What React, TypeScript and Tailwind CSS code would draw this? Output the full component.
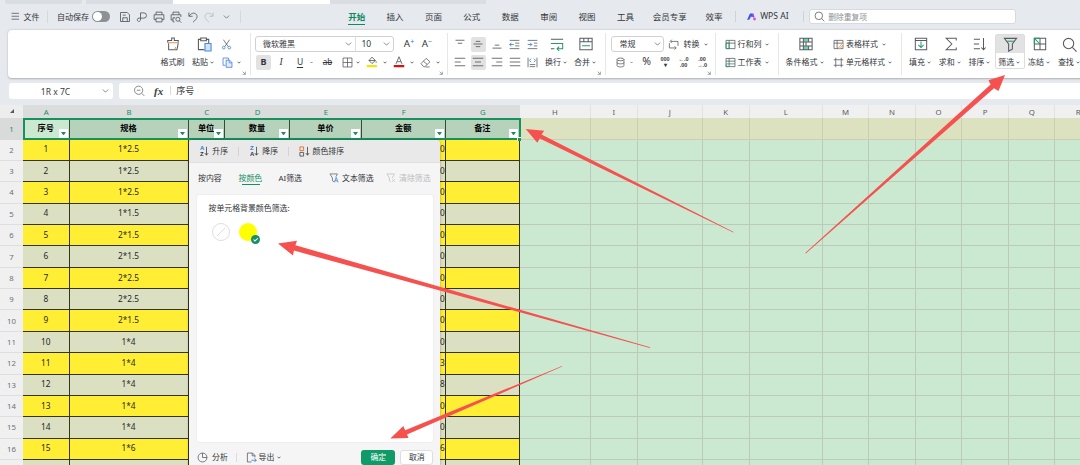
import type { ReactNode } from "react"

const RED = "#f5514f"

function Icon({ size = "size-[12px]", children, color = "text-[#575b60]" }: { size?: string; children: ReactNode; color?: string }) {
  return (
    <svg viewBox="0 0 16 16" className={`${size} ${color} shrink-0`} fill="none" stroke="currentColor" strokeWidth="1.15">
      {children}
    </svg>
  )
}

function Caret({ className = "w-[8px]" }: { className?: string }) {
  return (
    <span className={`${className} flex shrink-0 justify-center`}>
      <svg viewBox="0 0 6 4" className="h-[3px] w-[4px]" fill="none" stroke="#55595e" strokeWidth="1.3">
        <path d="M.8 .8 3 3 5.2 .8" />
      </svg>
    </span>
  )
}

function Chevron({ className = "" }: { className?: string }) {
  return (
    <svg viewBox="0 0 8 5" className={`h-[4px] w-[7px] shrink-0 ${className}`} fill="none" stroke="#6b6f74" strokeWidth="1">
      <path d="M.7 .7 4 4 7.3 .7" />
    </svg>
  )
}

function Slot({ w, on, children }: { w: string; on?: boolean; children?: ReactNode }) {
  return (
    <span className={`${w} flex h-[18px] shrink-0 items-center justify-center`}>
      {on ? <span className="flex size-[15px] items-center justify-center rounded-[2px] bg-[#e2e2e3]">{children}</span> : children}
    </span>
  )
}

function Group({ w, launcher, children }: { w: string; launcher?: boolean; children: ReactNode }) {
  return (
    <div className={`${w} relative flex shrink-0 py-[5.5px]`}>
      {children}
      <span className="absolute top-[3px] right-0 h-[42px] w-px bg-[#e6e7e8]" />
      {launcher && (
        <svg viewBox="0 0 6 6" className="absolute right-[5px] bottom-[3px] size-[4px]" fill="none" stroke="#77797c">
          <path d="M1 1l4 4M5 1v4H1" />
        </svg>
      )}
    </div>
  )
}

function BigButton({ w, icon, label, caret = true }: { w: string; icon: ReactNode; label: string; caret?: boolean }) {
  return (
    <div className={`${w} shrink-0`}>
      <Slot w="w-full">{icon}</Slot>
      <Slot w="w-full">
        {label}
        {caret && <Caret />}
      </Slot>
    </div>
  )
}

// horizontal strokes, each given as [y, x1, x2]
function Lines({ rows }: { rows: number[][] }) {
  return (
    <Icon>
      {rows.map(([y, a, b]) => (
        <path key={y} d={`M${a} ${y}H${b}`} />
      ))}
    </Icon>
  )
}

function TableIcon({ accent }: { accent?: ReactNode }) {
  return (
    <Icon size="size-[11px]">
      <path d="M1.5 2h13v12h-13zM1.5 6h13M6 2v12" />
      {accent}
    </Icon>
  )
}

// two stacked lines of tiny glyphs for the number format buttons
function Digits({ top, bottom }: { top: string; bottom: string }) {
  return (
    <span className="flex flex-col items-center font-['Liberation_Sans'] text-[5.500px] leading-[6px] font-bold">
      <span>{top}</span>
      <span>{bottom}</span>
    </span>
  )
}

const menu = ["开始", "插入", "页面", "公式", "数据", "审阅", "视图", "工具"]

function MenuBar() {
  return (
    <div className="flex h-[25.5px] items-center text-[8px] text-[#33363a]">
      <div className="flex w-[47px] items-center gap-[4px] pl-[11px]">
        <Icon size="size-[8.5px]">
          <path d="M1 2.5h14M1 8h14M1 13.5h14" strokeWidth="1.5" />
        </Icon>
        文件
      </div>
      <span className="h-[12px] w-px bg-[#d5d9de]" />
      <span className="ml-[9px] w-[34px] whitespace-nowrap">自动保存</span>
      <span className="ml-px flex h-[11px] w-[18px] items-center rounded-full bg-[#8d9095] p-px">
        <span className="size-[9px] rounded-full bg-white" />
      </span>
      <div className="ml-[7px] flex w-[125px] items-center">
        <Slot w="w-[16.8px]">
          <Icon>
            <path d="M2 2h9l3 3v9H2zM5 14V9h6v5M5 5.5h4" />
          </Icon>
        </Slot>
        <Slot w="w-[16.8px]">
          <Icon>
            <path d="M6 12V2.500h4.500a3.500 3.500 0 0 1 0 7H4a2.200 2.200 0 1 0 2 3" />
          </Icon>
        </Slot>
        <Slot w="w-[16.8px]">
          <Icon>
            <path d="M4 5V1.500h8V5M4 11.500H1.500V5h13v6.500H12M4 9.500h8v5H4z" />
          </Icon>
        </Slot>
        <Slot w="w-[16.8px]">
          <Icon>
            <path d="M4 5V1.500h8V5M4 12H1.500V5h13v3M6 14.500H4V9h3" />
            <circle cx="10.500" cy="11" r="2.700" />
            <path d="m12.500 13 2.500 2.500" />
          </Icon>
        </Slot>
        <Slot w="w-[16.8px]">
          <Icon>
            <path d="M2.500 2v5h5M2.800 6.800C5 3 9 1.800 11.800 4c3 2.500 2 6-3.800 11" />
          </Icon>
        </Slot>
        <Slot w="w-[16.8px]">
          <Icon color="text-[#b9bdc2]">
            <path d="M13.500 2v5h-5M13.200 6.800C11 3 7 1.800 4.200 4c-3 2.500-2 6 3.800 11" />
          </Icon>
        </Slot>
        <Slot w="w-[17px]">
          <Chevron />
        </Slot>
        <span className="ml-[5px] h-[12px] w-px bg-[#d5d9de]" />
      </div>
      <div className="ml-[95.500px] flex pt-[2px] text-[8.500px]">
        {menu.map((m, i) => (
          <span key={m} className="flex w-[38.4px] flex-col items-center">
            <span className={i === 0 ? "border-b border-[#0f8a5f] leading-[14px] font-bold text-[#0f8a5f]" : "leading-[14px]"}>{m}</span>
          </span>
        ))}
        <span className="w-[50.5px] text-center leading-[14px]">会员专享</span>
        <span className="w-[38px] text-center leading-[14px]">效率</span>
      </div>
      <span className="ml-[2px] h-[11px] w-px bg-[#cfd3d8]" />
      <svg viewBox="0 0 18 16" className="ml-[11px] h-[8px] w-[9px]">
        <path d="M6 1h4l3 6-3 1-2-1-3 6-5 1z" fill="#4353f2" />
        <path d="M9 1l4 0 2 7-3 1z" fill="#8a4df0" />
        <circle cx="15" cy="12" r="2.800" fill="#d650dd" />
      </svg>
      <span className="ml-[4px] w-[43px] text-[8.600px] whitespace-nowrap">WPS AI</span>
      <span className="h-[11px] w-px bg-[#cfd3d8]" />
      <div className="ml-[5px] flex h-[15px] w-[207px] items-center gap-[3px] rounded-[3px] border border-[#d6d9dd] bg-white px-[4px] text-[7.800px] text-[#8c8f93]">
        <Icon size="size-[11px]">
          <circle cx="7" cy="7" r="5.500" />
          <path d="m11 11 4 4" />
        </Icon>
        删除重复项
      </div>
    </div>
  )
}

function Ribbon() {
  return (
    <div className="ml-[8px] flex h-[48.5px] w-[1080px] rounded-l-[4px] bg-white text-[8px] whitespace-nowrap text-[#33363a] shadow-[0_0.5px_2px_rgba(0,0,0,0.25)]">
      <Group w="w-[242.5px] pl-[148.500px]" launcher>
        <BigButton
          w="w-[32px]"
          label="格式刷"
          caret={false}
          icon={
            <Icon size="size-[14px]">
              <path d="M2 6.500V4h4.500V1.200h3V4H14v2.500M3 7v7.500h9.500L14 7" />
              <path d="M2 6.500h12M10 14.500l1-3" stroke="#df9358" />
            </Icon>
          }
        />
        <BigButton
          w="w-[31px]"
          label="粘贴"
          icon={
            <Icon size="size-[15px]">
              <path d="M8 13.500H1.500v-11H4M10 2.500h2.500V7M4 1h6v3H4z" />
              <path d="M8.500 7H15v8H8.500z" fill="#cfe2fb" stroke="#4a8be0" />
            </Icon>
          }
        />
        <div className="w-[27px]">
          <Slot w="w-[14px]">
            <Icon size="size-[11px]">
              <path d="m3.500 1 7 10M12.500 1l-7 10" />
              <circle cx="4" cy="12.500" r="2" stroke="#3f7fd8" />
              <circle cx="12" cy="12.500" r="2" stroke="#3f7fd8" />
            </Icon>
          </Slot>
          <div className="flex">
            <Slot w="w-[16px]">
              <Icon size="size-[11px]" color="text-[#3f7fd8]">
                <path d="M5 12H1.500V1.500h8V4" />
                <path d="M6 4.500h5l3.500 3.500v7H6zM10.500 4.500V8.500h4" fill="#e3eefc" />
              </Icon>
            </Slot>
            <Caret className="w-[7px] items-center" />
          </div>
        </div>
      </Group>

      <Group w="w-[197px]" launcher>
        <div className="flex flex-col">
          <div className="flex h-[18px] items-center pl-[4.500px]">
            <div className="flex h-[16px] w-[139px] items-center rounded-[3px] border border-[#cfd1d4]">
              <div className="flex h-full w-[99.5px] items-center justify-between border-r border-[#dcdee0] pr-[3px] pl-[7px]">
                微软雅黑
                <Chevron />
              </div>
              <div className="flex flex-1 items-center justify-between pr-[3px] pl-[6px] text-[8.500px]">
                10
                <Chevron />
              </div>
            </div>
            <span className="ml-[6px] flex w-[18px] items-start justify-center text-[9.800px] leading-[12px]">
              A<span className="text-[7px] leading-[7px] text-[#2f76dd]">+</span>
            </span>
            <span className="flex w-[18px] items-start justify-center text-[9.800px] leading-[12px]">
              A<span className="text-[7px] leading-[7px] text-[#2f76dd]">−</span>
            </span>
          </div>
          <div className="flex pl-[4.500px]">
            <Slot w="w-[17px]" on>
              <b className="text-[9px]">B</b>
            </Slot>
            <Slot w="w-[18px]">
              <span className="font-['Liberation_Serif'] text-[9.500px] italic">I</span>
            </Slot>
            <Slot w="w-[20px]">
              <span className="text-[8.500px] underline underline-offset-2">U</span>
            </Slot>
            <Caret className="w-[3px] items-center" />
            <Slot w="w-[29px]">
              <span className="line-through">ab</span>
            </Slot>
            <Slot w="w-[11px]">
              <Icon size="size-[11px]">
                <path d="M1.500 1.500h13v13h-13zM8 1.500v13M1.500 8h13" />
              </Icon>
            </Slot>
            <Caret className="w-[9px] items-center" />
            <Slot w="w-[20px]">
              <Icon size="size-[12px]">
                <path d="M4 6 8 1.500 12.500 6 8 10zM4 6h8.500M13.500 7v2" />
                <path d="M1 12h13.500v3H1z" fill="#f3e50c" stroke="none" />
              </Icon>
            </Slot>
            <Caret className="w-[5px] items-center" />
            <Slot w="w-[23px]">
              <Icon size="size-[12px]">
                <path d="M4 10.500 8 1l4 9.500M5.500 7.500h5" />
                <path d="M1 12h14v3H1z" fill="#dc1010" stroke="none" />
              </Icon>
            </Slot>
            <Caret className="w-[4px] items-center" />
            <Slot w="w-[22px]">
              <Icon size="size-[11px]">
                <path d="M1.500 9.500 9 2l5.500 5-7.500 7H5zM5 6l5.500 5M8 14.500h6" />
              </Icon>
            </Slot>
            <Caret className="w-[4px] items-center" />
          </div>
        </div>
      </Group>

      <Group w="w-[158px] pl-[3.500px]" launcher>
        <div>
          <div className="flex">
            <Slot w="w-[18px]"><Lines rows={[[3, 2, 14], [7, 5, 11]]} /></Slot>
            <Slot w="w-[18.5px]" on><Lines rows={[[4.500, 5, 11], [8, 2, 14], [11.500, 5, 11]]} /></Slot>
            <Slot w="w-[18px]"><Lines rows={[[9.500, 5, 11], [13.500, 2, 14]]} /></Slot>
            <Slot w="w-[18px]">
              <Icon size="size-[11px]">
                <path d="M1 2h14M9 6h6M9 10h6M1 14h14" />
                <path d="M7 8H1M3.500 5.500 1 8l2.500 2.500" stroke="#2f76dd" />
              </Icon>
            </Slot>
            <Slot w="w-[18.500px]">
              <Icon size="size-[11px]">
                <path d="M1 2h14M10 6h5M10 10h5M1 14h14" />
                <path d="M1 8h6M4.500 5.500 7 8l-2.500 2.500" stroke="#2f76dd" />
              </Icon>
            </Slot>
          </div>
          <div className="flex">
            <Slot w="w-[18px]"><Lines rows={[[3, 1, 15], [8, 1, 9], [13, 1, 15]]} /></Slot>
            <Slot w="w-[18.5px]" on><Lines rows={[[3, 1, 15], [8, 4, 12], [13, 1, 15]]} /></Slot>
            <Slot w="w-[18px]"><Lines rows={[[3, 1, 15], [8, 7, 15], [13, 1, 15]]} /></Slot>
            <Slot w="w-[18px]"><Lines rows={[[3, 1, 15], [8, 1, 15], [13, 1, 15]]} /></Slot>
            <Slot w="w-[18.500px]">
              <Icon size="size-[11px]">
                <path d="M1.500 1v14M14.500 1v14M4 11h8M4 14h8" />
                <path d="M6 2.500 3.500 5 6 7.500M10 2.500 12.500 5 10 7.500" stroke="#2f76dd" />
              </Icon>
            </Slot>
          </div>
        </div>
        <BigButton
          w="w-[30px]"
          label="换行"
          icon={
            <Icon size="size-[14px]">
              <path d="M1 2.500h14M1 13.500h4" />
              <path d="M1 7.500h13.500v6H8M10.500 11 8 13.500l2.500 2.500" stroke="#219a6c" />
            </Icon>
          }
        />
        <BigButton
          w="w-[28px]"
          label="合并"
          icon={
            <Icon size="size-[14px]">
              <path d="M1 1.500h14v13H1zM1 5.500h14M5.500 1.500v4M10.500 1.500v4" />
              <path d="M3.500 10h9" stroke="#219a6c" />
            </Icon>
          }
        />
      </Group>

      <Group w="w-[110px] pl-[5px]" launcher>
        <div>
          <div className="flex items-center">
            <div className="flex h-[16px] w-[53px] items-center justify-between rounded-[3px] border border-[#cfd1d4] pr-[2px] pl-[8px]">
              常规
              <Chevron />
            </div>
            <Slot w="w-[20px]">
              <Icon size="size-[11px]">
                <path d="M4 3.500h10.500V10M2 6v7h9.500M5.500 1 3 3.500 5.500 6M9.500 10.500 12 13l-2.500 2.500" />
              </Icon>
            </Slot>
            转换
            <Caret className="w-[12px]" />
          </div>
          <div className="flex">
            <Slot w="w-[19px]">
              <Icon size="size-[11px]">
                <ellipse cx="8" cy="3.500" rx="5" ry="2" />
                <path d="M3 3.500v9c0 2.600 10 2.600 10 0v-9M3 8c0 2.600 10 2.600 10 0" />
              </Icon>
            </Slot>
            <Caret className="w-[3px] items-center" />
            <Slot w="w-[28px]"><span className="text-[10.500px]">%</span></Slot>
            <Slot w="w-[9px]"><Digits top="000" bottom="▾" /></Slot>
            <Slot w="w-[28px]"><Digits top="←.0" bottom=".00" /></Slot>
            <Slot w="w-[9px]"><Digits top=".00" bottom="→.0" /></Slot>
          </div>
        </div>
      </Group>

      <Group w="w-[63px] pl-[8.500px]">
        <div>
          <div className="flex items-center">
            <Slot w="w-[13.500px]"><TableIcon accent={<path d="M1.500 6h4.500v8H1.500z" stroke="#219a6c" />} /></Slot>
            行和列
            <Caret className="w-[10px]" />
          </div>
          <div className="flex items-center">
            <Slot w="w-[13.500px]"><TableIcon accent={<path d="M1.500 11v3H5M1.500 10h13" stroke="#219a6c" />} /></Slot>
            工作表
            <Caret className="w-[10px]" />
          </div>
        </div>
      </Group>

      <Group w="w-[123px] pl-[6px]">
        <BigButton
          w="w-[42px]"
          label="条件格式"
          icon={
            <Icon size="size-[14px]">
              <path d="M5 1.500h6v4H5zM8 10.500h3v4H5v-4z" fill="#6ed3a4" stroke="none" />
              <path d="M1 1.500h14v13H1zM1 5.800h14M1 10.200h14M5 1.500v13M11 1.500v4.300M11 10.200v4.300M8 5.800v4.400" />
            </Icon>
          }
        />
        <div className="ml-[4.500px]">
          <div className="flex items-center">
            <Slot w="w-[15px]">
              <TableIcon accent={<path d="m8 13 5.500-6.500 1.500 1.500-5 6z" fill="#fff" stroke="#e09a4c" />} />
            </Slot>
            表格样式
            <Caret className="w-[11px]" />
          </div>
          <div className="flex items-center">
            <Slot w="w-[15px]">
              <Icon size="size-[11px]">
                <path d="M4 1v14M12 1v14M1 4h14M1 12h14" />
              </Icon>
            </Slot>
            <span className="text-[7.800px]">单元格样式</span>
            <Caret className="w-[11px]" />
          </div>
        </div>
      </Group>

      <div className="flex py-[5.500px] pl-[4.500px]">
        <BigButton
          w="w-[29.800px]"
          label="填充"
          icon={
            <Icon size="size-[14px]">
              <path d="M1.500 1.500h13v13h-13zM1.500 4h13" />
              <path d="M8 5v7M5 9l3 3 3-3" stroke="#219a6c" />
            </Icon>
          }
        />
        <BigButton w="w-[29.800px]" label="求和" icon={<Icon size="size-[14px]"><path d="M14 4V1.500H2.500L9 8l-6.500 6.500H14V12" /></Icon>} />
        <BigButton w="w-[29.800px]" label="排序" icon={<Icon size="size-[14px]"><path d="M1 2.500h7M1 8h6M1 13.500h7M12 1v13.500M9.500 12l2.500 2.500 2.500-2.500" /></Icon>} />
        <BigButton
          w="-mt-px h-[35px] w-[29.800px] rounded-[2px] border border-[#dddddf] bg-linear-to-b from-[#e2e2e3] from-55% to-white to-55%"
          label="筛选"
          icon={
            <Icon size="size-[15px]">
              <path d="M1.500 1.500h13L10 7.500V13l-4 2V7.500z" />
              <path d="M4.500 4.500h7" stroke="#219a6c" />
            </Icon>
          }
        />
        <BigButton
          w="w-[29.800px]"
          label="冻结"
          icon={
            <Icon size="size-[14px]">
              <path d="M1.500 1.500h13v13h-13zM8 1.500v13M1.500 8h13" />
              <path d="M1.500 8V1.500H8M1.500 1.500 8 8" stroke="#219a6c" />
            </Icon>
          }
        />
        <BigButton w="w-[29.800px]" label="查找" icon={<Icon size="size-[15px]"><circle cx="7" cy="7" r="5.500" /><path d="m11 11 4.500 4.500" /></Icon>} />
      </div>
    </div>
  )
}

function FormulaBar() {
  return (
    <div className="mt-[4.500px] flex h-[16.500px] gap-[6px] pl-[9px] text-[8.500px] text-[#3a3d41]">
      <div className="flex w-[104px] items-center rounded-[3px] bg-white pr-[4px]">
        <span className="flex-1 pt-px text-center">1R x 7C</span>
        <Chevron />
      </div>
      <div className="flex flex-1 items-center rounded-l-[3px] bg-white">
        <Icon size="ml-[14px] size-[12px]" color="text-[#77797d]">
          <circle cx="7.500" cy="7" r="5.500" />
          <path d="M5 7h5M11.500 11l3.500 3.500" />
        </Icon>
        <span className="ml-[9px] font-['Liberation_Serif'] text-[11px] font-bold italic">fx</span>
        <span className="ml-[7px] h-[9px] w-px bg-[#d8dadc]" />
        <span className="ml-[5px] text-[9px]">序号</span>
      </div>
    </div>
  )
}

const columns = [
  { id: "A", w: "w-[46.500px]", title: "序号" },
  { id: "B", w: "w-[119px]", title: "规格" },
  { id: "C", w: "w-[36.200px]", title: "单位" },
  { id: "D", w: "w-[65.700px]", title: "数量" },
  { id: "E", w: "w-[71.300px]", title: "单价" },
  { id: "F", w: "w-[84.100px]", title: "金额" },
  { id: "G", w: "w-[74.200px]", title: "备注" },
  { id: "H", w: "w-[71px]" },
  { id: "I", w: "w-[46.800px]" },
  { id: "J", w: "w-[65px]" },
  { id: "K", w: "w-[47px]" },
  { id: "L", w: "w-[73px]" },
  { id: "M", w: "w-[46.500px]" },
  { id: "N", w: "w-[46.600px]" },
  { id: "O", w: "w-[46.600px]" },
  { id: "P", w: "w-[46.500px]" },
  { id: "Q", w: "w-[46.500px]" },
  { id: "R", w: "w-[46.500px]" },
]

// spec and the last digit of the amount
const rows = [
  ["1*2.5", "0"],
  ["1*2.5", "0"],
  ["1*2.5", "0"],
  ["1*1.5", "0"],
  ["2*1.5", "0"],
  ["2*1.5", "0"],
  ["2*2.5", "0"],
  ["2*2.5", "0"],
  ["2*1.5", "0"],
  ["1*4", "0"],
  ["1*4", "3"],
  ["1*4", "8"],
  ["1*4", "0"],
  ["1*4", "0"],
  ["1*6", "6"],
  [],
]

function Sheet() {
  return (
    <div className="mt-[5.500px] w-[1110px]">
      <div className="flex h-[13.500px] text-[7.800px]">
        <div className="flex w-[23px] items-center justify-center bg-[#ededee]">
          <svg viewBox="0 0 4 4" className="size-[4px]"><path d="M4 0v4H0z" fill="#55585c" /></svg>
        </div>
        {columns.map((c) => (
          <div
            key={c.id}
            className={`${c.w} flex shrink-0 items-center justify-center pt-px ${c.title ? "bg-[#dbdcdc] text-[#178f63]" : "border-r border-[#e2e2e2] bg-[#f0f0f0] text-[#5b5d60]"}`}
          >
            {c.id}
          </div>
        ))}
      </div>
      <div className="relative flex h-[21.600px] font-bold">
        <div className="flex w-[23px] items-center justify-center bg-[#d9dada] text-[7.800px] font-normal text-[#178f63]">1</div>
        {columns.map((c, i) =>
          c.title ? (
            <div
              key={c.id}
              className={`${c.w} relative flex shrink-0 items-center justify-center border-r border-[#37483d] text-[8.200px] text-black ${i === 0 ? "bg-[#cbe9d0]" : "bg-[#b6d2bb]"}`}
            >
              {c.title}
              <span className="absolute right-px bottom-[1.500px] flex size-[9px] items-center justify-center bg-white">
                <svg viewBox="0 0 6 4" className="h-[3.500px] w-[5px]"><path d="M0 0h6L3 4z" fill="#178f63" /></svg>
              </span>
            </div>
          ) : (
            <div key={c.id} className={`${c.w} shrink-0 border-r border-b border-[#ccceb2] bg-[#dce1bf]`} />
          ),
        )}
        <div className="absolute -top-[0.500px] left-[22.500px] h-[22.500px] w-[498px] border-2 border-[#17925f]">
          <span className="absolute -right-[2.500px] -bottom-[2.500px] size-[4px] border-t border-l border-white bg-[#17925f]" />
        </div>
      </div>
      {rows.map(([spec, last], r) => (
        <div key={r} className="flex h-[21.360px] text-[8.300px] text-[#26272a]">
          <div className="flex w-[23px] items-center justify-center border-b border-[#dedede] bg-[#f0f0f0] text-[7.800px] text-[#6f7174]">{spec && r + 2}</div>
          {columns.map((c, i) =>
            c.title ? (
              <div
                key={c.id}
                className={`${c.w} flex shrink-0 items-center justify-center border-r border-b border-[#35341d] ${r % 2 === 0 ? "bg-[#ffee33]" : "bg-[#dbe0c3]"}`}
              >
                {i === 0 && spec && r + 1}
                {i === 1 && spec}
                {i === 5 && <span className="w-full text-right">{last}</span>}
              </div>
            ) : (
              <div key={c.id} className={`${c.w} shrink-0 border-r border-b border-[#bccabb] bg-[#cbe9d0]`} />
            ),
          )}
        </div>
      ))}
    </div>
  )
}

function SortIcon({ top, bottom, boxes }: { top?: string; bottom?: string; boxes?: boolean }) {
  return (
    <span className="flex items-center">
      {boxes ? (
        <svg viewBox="0 0 6 12" className="h-[11px] w-[5.500px]" fill="none">
          <path d="M1 1h4v4H1z" stroke="#e5702f" />
          <path d="M1 7h4v4H1z" stroke="#55585c" />
        </svg>
      ) : (
        <span className="flex flex-col font-['Liberation_Sans'] text-[6px] leading-[6px] font-bold">
          <span className="text-[#2f76dd]">{top}</span>
          <span>{bottom}</span>
        </span>
      )}
      <svg viewBox="0 0 6 12" className="h-[10px] w-[5px]" fill="none" stroke="#44474b">
        <path d="M3 1v10M1 8.500 3 11l2-2.500" />
      </svg>
    </span>
  )
}

function FilterPanel() {
  return (
    <div className="absolute top-[140px] left-[189px] flex h-[340px] w-[251px] flex-col rounded-t-[4px] bg-[#f5f5f5] text-[7.900px] whitespace-nowrap text-[#303236] shadow-[0_0_3px_rgba(0,0,0,0.3)]">
      <div className="flex h-[23px] items-center rounded-t-[4px] border-b border-[#e0e0e0] bg-[#e9e9e9] pl-[11px]">
        <div className="flex w-[38px] items-center gap-[3px]"><SortIcon top="A" bottom="Z" />升序</div>
        <span className="h-[9px] w-px bg-[#d3d3d3]" />
        <div className="ml-[11px] flex w-[38px] items-center gap-[3px]"><SortIcon top="Z" bottom="A" />降序</div>
        <span className="h-[9px] w-px bg-[#d3d3d3]" />
        <div className="ml-[10px] flex items-center gap-[3px]"><SortIcon boxes />颜色排序</div>
      </div>
      <div className="flex h-[30.500px] items-center pl-[9px]">
        <span className="w-[40.500px]">按内容</span>
        <span className="relative w-[40px] text-[#178f63]">
          按颜色
          <span className="absolute -bottom-[2px] left-[3px] h-px w-[18px] bg-[#178f63]" />
        </span>
        <span className="w-[50.500px]">AI筛选</span>
        <div className="flex w-[57px] items-center gap-[3px]">
          <Icon size="size-[10px]">
            <path d="M8 14 5.500 12.500V8L1.500 1.500h12L11 6" />
            <path d="m8.500 15 3-8 3 8M9.500 12.500h4" stroke="#2f76dd" />
          </Icon>
          文本筛选
        </div>
        <div className="flex items-center gap-[3px] text-[#bcbdbf]">
          <Icon size="size-[10px]" color="text-[#bcbdbf]">
            <path d="M8 14.500 5.500 12.500V8L1.500 1.500h12L10 8M10 10l4 4M14 10l-4 4" />
          </Icon>
          清除筛选
        </div>
      </div>
      <div className="ml-[6.500px] h-[249px] w-[238px] rounded-[3px] border border-[#eeeeee] bg-white pt-[7px] pl-[12px]">
        <div className="leading-[13px]">按单元格背景颜色筛选:</div>
        <div className="mt-[8px] flex gap-[9px] pl-[3px]">
          <svg viewBox="0 0 18 18" className="size-[18px]" fill="none" stroke="#dedede">
            <circle cx="9" cy="9" r="8.500" />
            <path d="M5 13 13 5" />
          </svg>
          <span className="relative size-[18px] rounded-full bg-[#ffff00]">
            <svg viewBox="0 0 8 8" className="absolute -right-[3px] -bottom-[3px] size-[9px]">
              <circle cx="4" cy="4" r="4" fill="#178f63" />
              <path d="M2.200 4 3.500 5.300 6 2.900" fill="none" stroke="#fff" strokeWidth=".9" />
            </svg>
          </span>
        </div>
      </div>
      <div className="flex h-[30px] items-center pl-[8px]">
        <Icon size="size-[11px]">
          <circle cx="8" cy="8" r="6.500" />
          <path d="M8 1.500V8h6.500" />
        </Icon>
        <span className="ml-[4px] w-[24px]">分析</span>
        <span className="h-[9px] w-px bg-[#dddddd]" />
        <Icon size="ml-[9px] size-[11px]">
          <path d="M8 14.500H2v-13h7.500L13 5v3M9 1.500V5.500h4" />
          <path d="M8 12h7M12.500 9.500 15 12l-2.500 2.500" stroke="#2f76dd" />
        </Icon>
        <span className="ml-[1.500px]">导出</span>
        <Caret className="w-[10px]" />
        <span className="ml-[77px] flex h-[15px] w-[34px] items-center justify-center rounded-[3px] bg-[#0f9a67] text-white">确定</span>
        <span className="ml-[5px] flex h-[15px] w-[33px] items-center justify-center rounded-[3px] border border-[#dedede] bg-white">取消</span>
      </div>
    </div>
  )
}

export default function App() {
  return (
    <div className="relative h-[465px] w-[1080px] overflow-hidden bg-[#e6e9ee] font-['Noto_Sans','Noto_Sans_CJK_SC',sans-serif] leading-[1.3]">
      <div className="flex h-[4px]">
        <span className="ml-[5px] w-[77px] rounded-b-[2px] bg-[#dadde1]" />
        <span className="ml-[4px] w-[87px] bg-[#dadde1]" />
        <span className="w-[157px] bg-white" />
        <span className="w-[156px] bg-[#dadde1]" />
      </div>
      <MenuBar />
      <Ribbon />
      <FormulaBar />
      <Sheet />
      <FilterPanel />

      {/* annotation arrows */}
      <svg viewBox="0 0 1080 465" className="pointer-events-none absolute inset-0 h-[465px] w-[1080px]" fill={RED}>
        <path d="M525.700 129 544.200 130.700 541.500 134.600 733.700 232 733.300 232.500 539.800 138.600 537.300 142.800z" />
        <path d="M1005 75 988.500 80.200 990.600 84.400 805.200 253 805.800 253.500 994 88.300 998.500 91z" />
        <path d="M278 243.500 297 240.800 295.400 245.200 650.200 347.200 650 347.900 293.900 250.600 293 255.500z" />
        <path d="M390.300 438.500 403.300 426 405.200 430.300 562 366 562.200 366.600 407 434.500 408.500 438z" />
      </svg>
    </div>
  )
}
